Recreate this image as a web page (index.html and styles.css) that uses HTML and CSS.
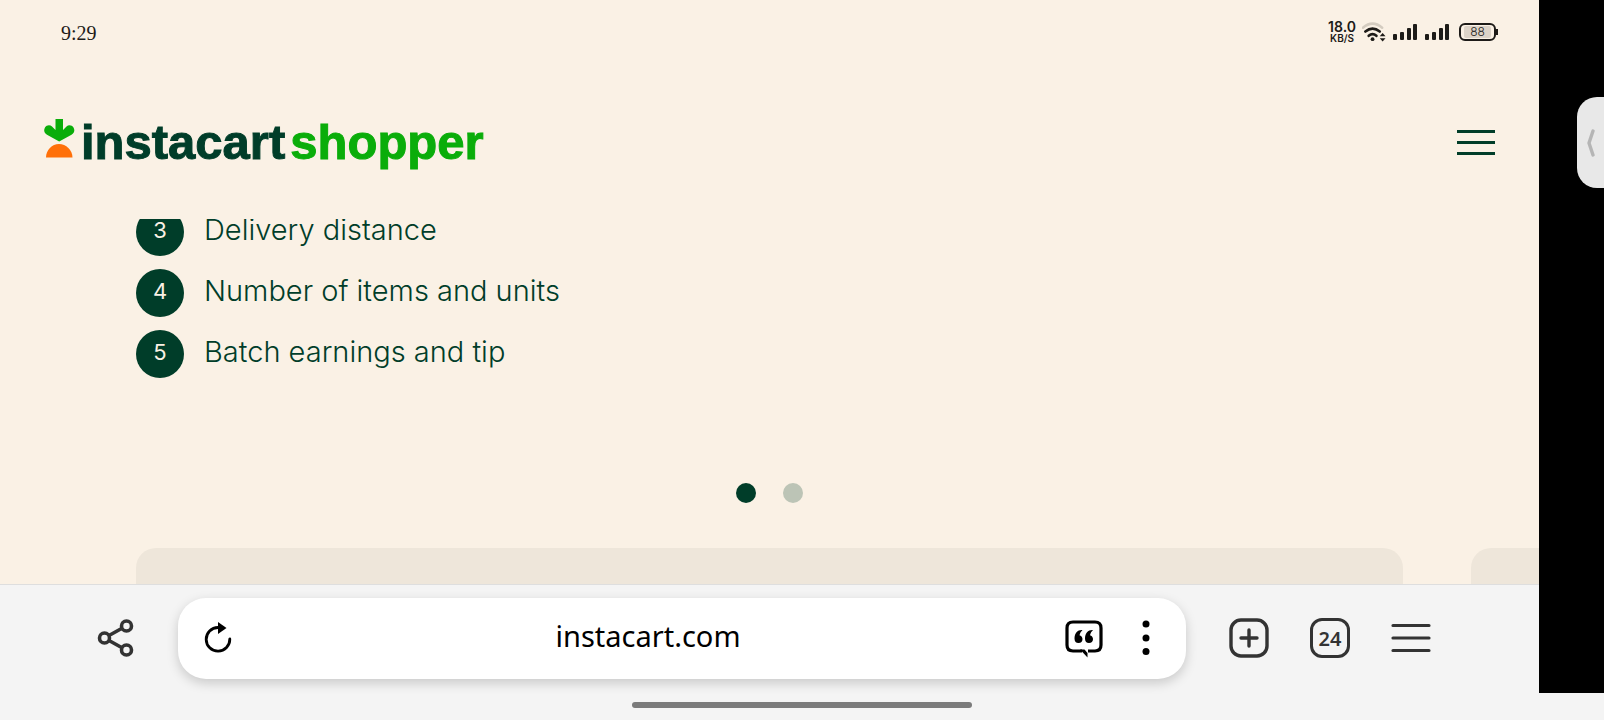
FILE: index.html
```html
<!DOCTYPE html>
<html lang="en">
<head>
  <meta charset="UTF-8" />
  <title>Instacart Shopper</title>
  <meta name="viewport" content="width=device-width, initial-scale=1.0" />
  <link rel="stylesheet" href="styles.css">
</head>
<body>

<div class="screen">
  <div class="browser">

    <div class="status-bar">
      <span class="clock">9:29</span>
      <div class="status-icons">
        <div class="net-speed">
          <span class="speed">18.0</span>
          <span class="unit">KB/S</span>
        </div>
        <svg class="wifi" width="24" height="22" viewBox="1 0 25 22" fill="none" stroke-linecap="round">
          <path d="M2 6.500Q12 -2 22 6.500" stroke="#d4ccc0" stroke-width="2.600" />
          <path d="M4.500 10.500Q12 4.500 19.500 10.500M8 15Q12 11.500 16 15" stroke="#1d1b18" stroke-width="2.800" />
          <circle cx="12" cy="18.500" r="2" fill="#1d1b18" />
          <path d="M19.500 15.500L22.500 12L25.500 15.500ZM19.500 17.500L22.500 21L25.500 17.500Z" fill="#1d1b18" />
        </svg>
        <svg class="signal" width="26" height="18" viewBox="0 0 26 18" fill="#1d1b18">
          <rect x="1" y="11" width="4" height="6" rx="1" />
          <rect x="8" y="9" width="4" height="8" rx="1" />
          <rect x="15" y="5" width="4" height="12" rx="1" />
          <rect x="21" y="1" width="4" height="16" rx="1" />
        </svg>
        <svg class="signal" width="26" height="18" viewBox="0 0 26 18" fill="#1d1b18">
          <rect x="1" y="11" width="4" height="6" rx="1" />
          <rect x="8" y="9" width="4" height="8" rx="1" />
          <rect x="15" y="5" width="4" height="12" rx="1" />
          <rect x="21" y="1" width="4" height="16" rx="1" />
        </svg>
        <div class="battery"><span class="level">88</span></div>
      </div>
    </div>

    <header class="site-header">
      <a class="logo" href="#" aria-label="Instacart Shopper">
        <svg class="carrot" width="32" height="46" viewBox="0 0 32 46">
          <path d="M11.500 0H19V11L22.500 7.500C24.500 5.500 28 6 29.500 8.500C31 11 30.500 14 27.500 15.800L15.200 22.500L3 15.800C0 14 -.5 11 1 8.500C2.500 6 6 5.500 8 7.500L11.500 11Z" fill="#0aad0a" />
          <path d="M2 38.500C2 31 8 25 15 25S28.500 31 28.500 38.500Z" fill="#ff7009" />
        </svg>
        <span class="word">instacart</span>
        <span class="word word-green">shopper</span>
      </a>
      <button class="menu-button" aria-label="Menu">
        <span class="bar"></span>
        <span class="bar"></span>
        <span class="bar"></span>
      </button>
    </header>

    <main class="content">
      <ol class="steps" start="3">
        <li class="step"><span class="num">3</span><span class="label">Delivery distance</span></li>
        <li class="step"><span class="num">4</span><span class="label">Number of items and units</span></li>
        <li class="step"><span class="num">5</span><span class="label">Batch earnings and tip</span></li>
      </ol>

      <div class="dots">
        <button class="dot dot-active" aria-label="Slide 1"></button>
        <button class="dot" aria-label="Slide 2"></button>
      </div>

      <div class="cards">
        <div class="card"></div>
        <div class="card"></div>
      </div>
    </main>

    <nav class="toolbar">
      <button class="tool" aria-label="Share">
        <svg width="40" height="40" viewBox="0 0 40 40" fill="none" stroke="#333" stroke-width="3.600">
          <circle cx="9.500" cy="20" r="5" />
          <circle cx="31.500" cy="8" r="5" />
          <circle cx="31.500" cy="32" r="5" />
          <path d="M14 17.500L27 10.200M14 22.500L27 29.800" />
        </svg>
      </button>

      <div class="address">
        <button class="tool-small" aria-label="Reload">
          <svg width="28" height="32" viewBox="0 0 28 32">
            <path d="M14 5.500A11.800 11.800 0 1 0 25.800 17" fill="none" stroke="#000" stroke-width="2.800" stroke-linecap="round" />
            <path d="M14 0L22.500 6L14 12Z" />
          </svg>
        </button>
        <input class="url" type="text" value="instacart.com" aria-label="Address">
        <button class="tool" aria-label="Reviews">
          <svg width="40" height="40" viewBox="0 0 40 40">
            <path d="M24 33H31Q37 33 37 27V10Q37 4 31 4H9Q3 4 3 10V27Q3 33 9 33H18" fill="none" stroke="#000" stroke-width="3.200" />
            <path d="M16 31.500H20.500L23.500 35V39.500Z" />
            <path d="M18.500 12C14 11.500 10.500 15 10.500 20.500C10.500 23.500 12 25 14.500 25C17 25 18.500 23.500 18.500 21C18.500 19 17 17.500 15.500 17.200C16 15 17 13.500 18.500 12Z" />
            <path d="M29 12C24.500 11.500 21 15 21 20.500C21 23.500 22.500 25 25 25C27.500 25 29 23.500 29 21C29 19 27.500 17.500 26 17.200C26.500 15 27.500 13.500 29 12Z" />
          </svg>
        </button>
        <button class="more" aria-label="More">
          <svg width="8" height="40" viewBox="0 0 8 40">
            <circle cx="4" cy="6" r="3.500" />
            <circle cx="4" cy="20" r="3.500" />
            <circle cx="4" cy="33.500" r="3.500" />
          </svg>
        </button>
      </div>

      <div class="tabs">
        <button class="tool" aria-label="New tab">
          <svg width="40" height="40" viewBox="0 0 40 40" fill="none" stroke="#333" stroke-width="3.400" stroke-linecap="round">
            <rect x="2" y="2" width="36" height="36" rx="10" />
            <path d="M12 20H28M20 12V28" />
          </svg>
        </button>
        <button class="tool tab-count" aria-label="24 tabs">24</button>
        <button class="tool" aria-label="Browser menu">
          <svg width="40" height="40" viewBox="0 0 40 40" stroke="#333" stroke-width="3.200" stroke-linecap="round">
            <path d="M2 7.500H38M2 20H38M2 32.500H38" />
          </svg>
        </button>
      </div>
    </nav>
  </div>

  <aside class="edge">
    <button class="edge-handle" aria-label="Open sidebar">
      <svg width="10" height="28" viewBox="0 0 10 28" fill="none" stroke="#b5b5b5" stroke-width="3.400" stroke-linecap="round" stroke-linejoin="round">
        <path d="M7 2L3 14L7 26" />
      </svg>
    </button>
  </aside>
</div>

<div class="gesture"><span class="pill"></span></div>

</body>
</html>
```

FILE: styles.css
```css
* {
  box-sizing: border-box;
}

body {
  margin: 0;
  height: 100vh;
  display: flex;
  flex-direction: column;
  overflow: hidden;
  background: #f4f4f4;
  font-family: Inter, sans-serif;
  color: #003d29;
}

button {
  padding: 0;
  border: none;
  background: none;
  font: inherit;
  color: inherit;
  cursor: pointer;
}

svg {
  display: block;
}

.screen {
  flex: 1;
  min-height: 0;
  display: flex;
}

.browser {
  flex: 1;
  min-width: 0;
  display: flex;
  flex-direction: column;
  background: #faf1e5;
}

/* Phone status bar */
.status-bar {
  display: flex;
  justify-content: space-between;
  align-items: center;
  height: 64px;
  padding: 0 40px 0 61px;
  color: #1d1b18;
}

.clock {
  padding-top: 2px;
  font-family: "Liberation Serif", serif;
  font-size: 20px;
}

.status-icons {
  display: flex;
  align-items: center;
  gap: 6px;
}

.net-speed {
  display: flex;
  flex-direction: column;
  align-items: center;
  font-weight: 600;
}

.speed {
  font-size: 14px;
  line-height: 12px;
}

.unit {
  font-size: 10px;
  line-height: 10px;
}

.battery {
  position: relative;
  width: 37px;
  height: 18px;
  margin: 0 3px;
  padding: 1px 3px;
  border: 2px solid #1d1b18;
  border-radius: 6px;
}

.battery::after {
  content: "";
  position: absolute;
  right: -4px;
  top: 4px;
  width: 2px;
  height: 6px;
  background: #1d1b18;
}

.level {
  display: block;
  border-radius: 2px;
  background: #dcd3c8;
  font-size: 12px;
  font-weight: 300;
  line-height: 12px;
  text-align: center;
}

/* Site header */
.site-header {
  display: flex;
  justify-content: space-between;
  align-items: center;
  height: 155px;
  padding: 0 44px;
}

.logo {
  display: flex;
  align-items: center;
  gap: 5px;
  color: #003d29;
  text-decoration: none;
}

.word {
  font-family: "Liberation Sans", sans-serif;
  font-size: 49px;
  font-weight: 700;
  line-height: 56px;
  -webkit-text-stroke: 1px currentColor;
}

.word-green {
  color: #0aad0a;
}

.menu-button {
  display: flex;
  flex-direction: column;
  gap: 8px;
  width: 38px;
  margin-top: 2px;
}

.bar {
  height: 3px;
  background: #003d29;
}

/* Page content */
.content {
  flex: 1;
  min-height: 0;
  overflow: hidden;
}

.steps {
  display: flex;
  flex-direction: column;
  gap: 13px;
  margin: -11px 0 0;
  padding: 0 136px;
  list-style: none;
}

.step {
  display: flex;
  gap: 20px;
  line-height: 44px;
}

.num {
  width: 48px;
  height: 48px;
  border-radius: 50%;
  background: #003d29;
  color: #faf1e5;
  font-size: 22px;
  text-align: center;
}

.label {
  font-size: 29px;
  font-weight: 300;
}

.dots {
  display: flex;
  justify-content: center;
  gap: 27px;
  margin: 105px 0 45px;
}

.dot {
  width: 20px;
  height: 20px;
  border-radius: 50%;
  background: #bcc4b6;
}

.dot-active {
  background: #003d29;
}

.cards {
  display: flex;
  gap: 68px;
  padding-left: 136px;
}

.card {
  flex: 0 0 calc(100% - 136px);
  height: 200px;
  border-radius: 20px;
  background: #eee6da;
}

/* Browser toolbar */
.toolbar {
  display: flex;
  align-items: center;
  gap: 43px;
  height: 109px;
  padding: 0 108px 2px 95px;
  border-top: 1px solid #dedede;
  background: #f4f4f4;
  color: #333;
}

.tool {
  display: flex;
  justify-content: center;
  align-items: center;
  width: 40px;
  height: 40px;
}

.address {
  flex: 1;
  display: flex;
  align-items: center;
  height: 81px;
  padding: 0 36px 0 26px;
  border-radius: 28px;
  background: #fff;
  box-shadow: 0 4px 12px rgba(0, 0, 0, 0.18);
}

.url {
  flex: 1;
  min-width: 0;
  padding: 0 0 4px;
  border: none;
  outline: none;
  background: none;
  font-family: "Noto Sans", sans-serif;
  font-size: 29px;
  line-height: 40px;
  text-align: center;
  color: #000;
}

.more {
  margin-left: 38px;
}

.tabs {
  display: flex;
  align-items: center;
  gap: 41px;
}

.tab-count {
  border: 3px solid #333;
  border-radius: 12px;
  font-family: "Noto Sans", sans-serif;
  font-size: 20px;
  font-weight: 600;
}

/* Black strip beside the page */
.edge {
  width: 65px;
  padding-top: 97px;
  background: #000;
}

.edge-handle {
  display: flex;
  align-items: center;
  width: 27px;
  height: 91px;
  margin-left: auto;
  padding-left: 9px;
  border-radius: 20px 0 0 20px;
  background: #e8e8e8;
}

.gesture {
  display: flex;
  justify-content: center;
  height: 27px;
  padding-top: 9px;
}

.pill {
  width: 340px;
  height: 6px;
  border-radius: 3px;
  background: #7b7b7b;
}
```
